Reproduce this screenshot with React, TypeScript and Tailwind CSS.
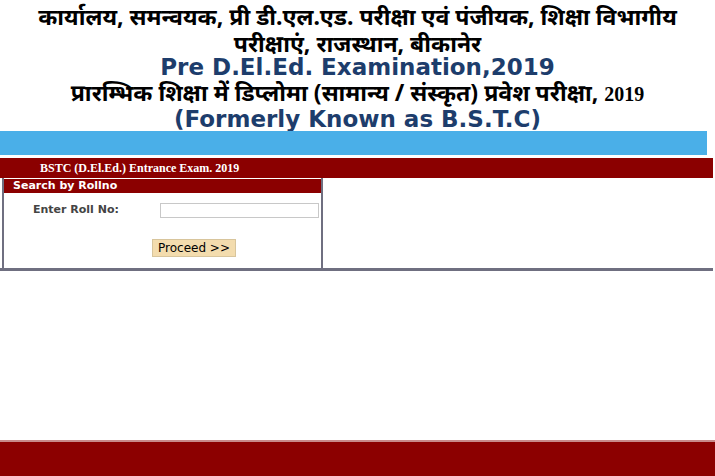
import React, { useState } from 'react';

const hindi = { fontFamily: '"Noto Sans", "DejaVu Sans", sans-serif' };

const App: React.FC = () => {
  const [roll, setRoll] = useState('');

  return (
    <div className="w-[715px] h-[476px] bg-white flex flex-col overflow-hidden">
      <div className="flex flex-col items-center pt-[2px]">
        <h1 className="text-[23px] leading-[28px] font-bold text-black text-center" style={hindi}>
          कार्यालय, समन्वयक, प्री डी.एल.एड. परीक्षा एवं पंजीयक, शिक्षा विभागीय
        </h1>
        <h1 className="text-[23px] leading-[26px] font-bold text-black text-center" style={hindi}>
          परीक्षाएं, राजस्थान, बीकानेर
        </h1>
        <h2 className="text-[23px] leading-[23px] font-bold text-[#1d3d6c] font-['DejaVu_Sans',sans-serif]">
          Pre D.El.Ed. Examination,2019
        </h2>
        <h2 className="text-[23px] leading-[27px] font-bold text-black text-center" style={hindi}>
          प्रारम्भिक शिक्षा में डिप्लोमा (सामान्य / संस्कृत) प्रवेश परीक्षा, <span className="font-['Liberation_Serif',serif] text-[20px]">2019</span>
        </h2>
        <h2 className="text-[23px] leading-[23px] font-bold text-[#1d3d6c] font-['DejaVu_Sans',sans-serif]">
          (Formerly Known as B.S.T.C)
        </h2>
      </div>

      <div className="w-[707px] h-[24px] bg-[#4aafe8]" />

      <div className="mt-[3px] w-[713px] h-[20px] bg-[#8b0000] flex items-center pl-[40px]">
        <span className="text-white font-bold text-[12px] font-['Liberation_Serif',serif]">
          BSTC (D.El.Ed.) Entrance Exam. 2019
        </span>
      </div>

      <div className="w-[713px] flex border-b-[3px] border-[#6f6f80]">
        <div className="ml-[2px] w-[321px] h-[90px] border-l-2 border-r-2 border-[#6f6f80] flex flex-col">
          <div className="h-[14px] mt-[1px] bg-[#8b0000] flex items-center pl-[9px]">
            <span className="text-white font-bold text-[11px] font-['DejaVu_Sans',sans-serif]">Search by Rollno</span>
          </div>
          <div className="flex items-center mt-[9px]">
            <label className="ml-[29px] w-[127px] text-[11px] font-bold text-[#444] font-['DejaVu_Sans',sans-serif]">Enter Roll No:</label>
            <input
              value={roll}
              onChange={(e) => setRoll(e.target.value)}
              className="w-[159px] h-[15px] border border-[#c8c8c8] bg-white outline-none"
            />
          </div>
          <div className="flex mt-[20px] pl-[148px]">
            <button className="w-[84px] h-[18px] bg-[#f3dcae] border border-[#d8c59c] text-[12px] text-black font-['DejaVu_Sans',sans-serif] leading-none">
              Proceed &gt;&gt;
            </button>
          </div>
        </div>
        <div className="flex-1" />
      </div>

      <div className="flex-1" />
      <div className="h-[36px] bg-[#8c0000] border-t-2 border-[#c98a8a]" />
    </div>
  );
};

export default App;
